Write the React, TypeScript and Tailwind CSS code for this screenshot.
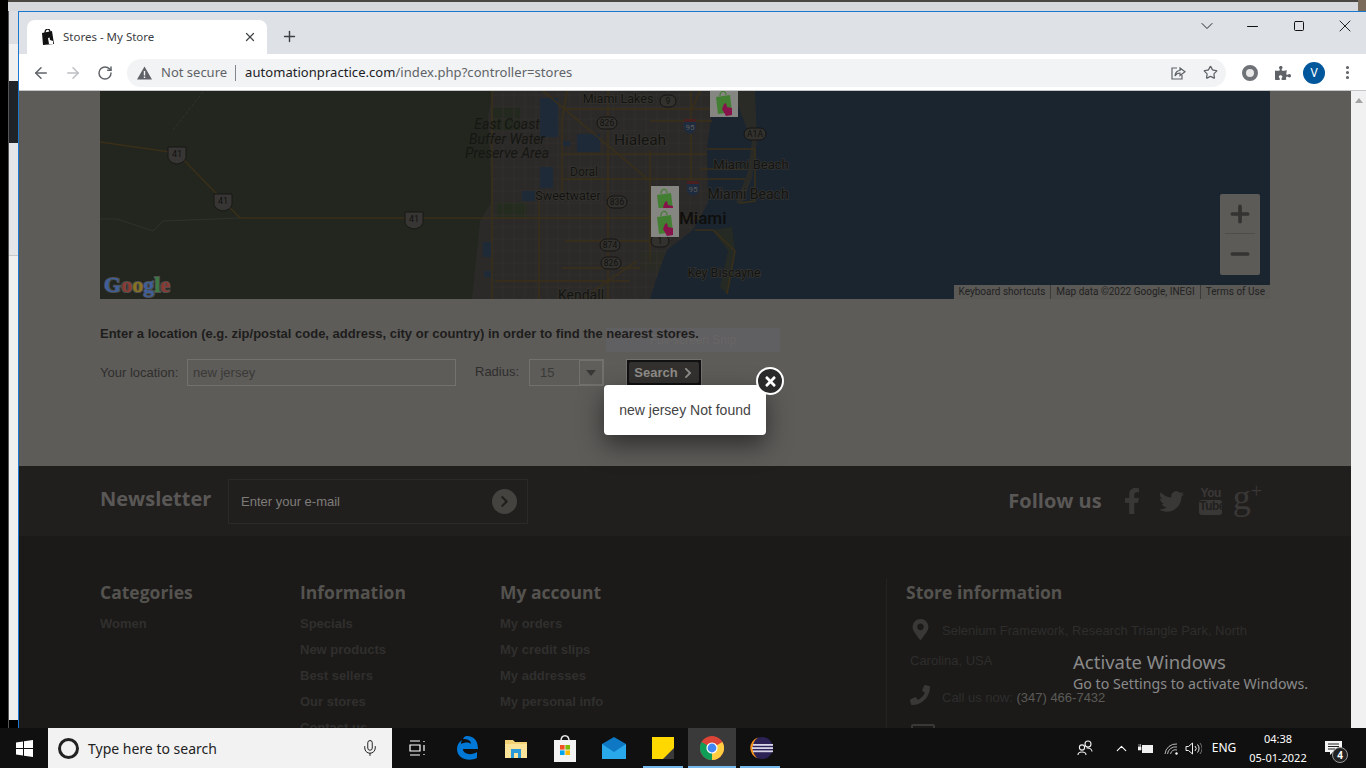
import {
  ArrowLeft,
  ArrowRight,
  ChevronDown,
  ChevronUp,
  EllipsisVertical,
  Mic,
  Minus,
  Plus,
  RotateCw,
  Square,
  Star,
  X,
} from "lucide-react";
import {
  FaChevronRight,
  FaFacebookF,
  FaMapMarkerAlt,
  FaPhoneAlt,
  FaPuzzlePiece,
  FaTimes,
  FaTwitter,
} from "react-icons/fa";

const mapFont = "Roboto, sans-serif";

// major roads, in map coordinates
const roads = [
  "M0 51 L77 62 L140 127 L393 127",
  "M392 0 V208",
  "M439 110 V208",
  "M467 0 L462 30 V105",
  "M508 0 V208",
  "M550 60 V170",
  "M591 0 V90",
  "M443 0 L550 90",
  "M537 170 L483 207",
  "M393 127 H600",
  "M462 88 H645",
  "M462 63 H607",
  "M463 18 H610",
  "M550 30 H612",
  "M465 150 H555",
  "M462 177 H540",
  "M395 190 H530",
  "M607 58 H655 V110 L640 112",
  "M600 78 H645",
  "M595 139 H613 L635 160 L627 203",
  "M600 0 L591 20",
];

const lakes = [
  [440, 7, 18, 39],
  [440, 76, 13, 21],
  [422, 100, 13, 10],
  [383, 151, 9, 15],
  [477, 43, 23, 18],
  [462, 50, 8, 5],
  [384, 180, 7, 6],
];

const labels = [
  { t: "Miami Lakes", x: 518, y: 12, s: 12.5 },
  { t: "Hialeah", x: 540, y: 54, s: 15.5 },
  { t: "Doral", x: 484, y: 85, s: 12 },
  { t: "Sweetwater", x: 468, y: 109, s: 12.5 },
  { t: "Miami Beach", x: 651, y: 78, s: 13 },
  { t: "Miami Beach", x: 648, y: 108, s: 14 },
  { t: "Key Biscayne", x: 624, y: 186, s: 12.5 },
  { t: "Kendall", x: 481, y: 209, s: 14 },
];

const badges = [
  { t: "826", x: 507, y: 32, w: 20 },
  { t: "9", x: 568, y: 10, w: 16 },
  { t: "A1A", x: 655, y: 43, w: 22 },
  { t: "836", x: 517, y: 111, w: 20 },
  { t: "874", x: 510, y: 154, w: 20 },
  { t: "826", x: 511, y: 172, w: 20 },
  { t: "1", x: 560, y: 150, w: 18 },
];

function Pin({ x, y }: { x: number; y: number }) {
  return (
    <g transform={`translate(${x} ${y})`}>
      <rect width="28" height="29" fill="#858581" />
      <path d="M6 9 L20 7 L22 24 L8 26 Z" fill="#437f33" />
      <path d="M10 8 C10 2 16 2 16 7" fill="none" stroke="#437f33" strokeWidth="1.2" />
      <path d="M14 16 L16 15 L17 19 L22 20 L22 27 L16 28 L12 21 Z" fill="#86134a" />
    </g>
  );
}

function MapCanvas() {
  return (
    <svg width="1170" height="208" viewBox="0 0 1170 208" className="block">
      <rect width="1170" height="208" fill="#22261f" />
      <path d="M393 0 L388 25 L392 110 L380 130 L372 208 H640 V0 Z" fill="#2c2a28" />
      <rect x="393" y="16" width="27" height="24" fill="#24291f" />
      <rect x="397" y="111" width="30" height="15" fill="#242c20" />
      <path d="M540 160 h30 v20 h-30 z" fill="#2b2b26" />
      {Array.from({ length: 22 }, (_, i) => (
        <path key={i} d={`M${392 + i * 11} 0 V208`} stroke="#33312e" strokeWidth="0.7" />
      ))}
      {Array.from({ length: 18 }, (_, i) => (
        <path key={i} d={`M392 ${4 + i * 12} H640`} stroke="#33312e" strokeWidth="0.7" />
      ))}
      {lakes.map(([x, y, w, h], i) => (
        <rect key={i} x={x} y={y} width={w} height={h} fill="#1f2a39" />
      ))}
      <path
        d="M640 0 L612 22 L607 56 L608 112 L593 139 L567 159 L557 186 L550 208 H1170 V0 Z"
        fill="#1b2530"
      />
      <path d="M632 0 H655 L657 50 L652 87 L642 113 L636 112 L648 80 L652 50 Z" fill="#2a2b27" />
      <path d="M612 139 L632 136 L635 160 L627 203 L620 196 L628 160 Z" fill="#262a24" />
      <path d="M0 128 L17 128 L53 140 L63 130 L140 127" fill="none" stroke="#34332f" strokeWidth="0.8" />
      <path d="M103 1 L73 39" fill="none" stroke="#2f3830" strokeWidth="0.8" strokeDasharray="3 2" />
      {roads.map((d, i) => (
        <path key={i} d={d} fill="none" stroke="#3a2f18" strokeWidth="1.5" />
      ))}
      {[
        [77, 63],
        [123, 110],
        [314, 128],
      ].map(([x, y], i) => (
        <g key={i}>
          <path
            d={`M${x - 9} ${y - 7} h18 l0 11 q-2 5 -9 6 q-7 -1 -9 -6 z`}
            fill="#383634"
            stroke="#171716"
          />
          <text x={x} y={y + 3} fontSize="9" textAnchor="middle" fill="#11110f" fontFamily={mapFont}>
            41
          </text>
        </g>
      ))}
      {badges.map((b) => (
        <g key={b.t + b.x}>
          <rect x={b.x - b.w / 2} y={b.y - 6} width={b.w} height="12" rx="6" fill="#33312e" stroke="#141413" />
          <text x={b.x} y={b.y + 3} fontSize="8.5" textAnchor="middle" fill="#11110f" fontFamily={mapFont}>
            {b.t}
          </text>
        </g>
      ))}
      {[
        [590, 35],
        [593, 97],
      ].map(([x, y]) => (
        <g key={x}>
          <path d={`M${x - 6} ${y - 7} h12 v9 q-1 4 -6 6 q-5 -2 -6 -6 z`} fill="#1f2b3e" />
          <rect x={x - 6} y={y - 7} width="12" height="3" fill="#4a1f1f" />
          <text x={x} y={y + 4} fontSize="8" textAnchor="middle" fill="#5c5b58" fontFamily={mapFont}>
            95
          </text>
        </g>
      ))}
      <g fontFamily={mapFont} fontSize="14" fontStyle="italic" fill="#151612" textAnchor="middle">
        <text x="407" y="38">East Coast</text>
        <text x="407" y="53">Buffer Water</text>
        <text x="407" y="67">Preserve Area</text>
      </g>
      <g fontFamily={mapFont} fill="#131311" textAnchor="middle" stroke="#34332f" strokeWidth="1.5" paintOrder="stroke">
        {labels.map((l) => (
          <text key={l.t + l.y} x={l.x} y={l.y} fontSize={l.s}>
            {l.t}
          </text>
        ))}
      </g>
      <text x="579" y="133" fontFamily={mapFont} fontSize="17" fontWeight="500" fill="#0e0e0d">
        Miami
      </text>
      <Pin x={610} y={-3} />
      <Pin x={551} y={95} />
      <Pin x={551} y={117} />
      <text
        x="4"
        y="201"
        fontFamily="'Liberation Serif', serif"
        fontWeight="700"
        fontSize="22"
        stroke="#4e4e4c"
        strokeWidth="2"
        paintOrder="stroke"
      >
        <tspan fill="#3f5f9c">G</tspan>
        <tspan fill="#8a3a33">o</tspan>
        <tspan fill="#8a7320">o</tspan>
        <tspan fill="#3f5f9c">g</tspan>
        <tspan fill="#3c7a45">l</tspan>
        <tspan fill="#8a3a33">e</tspan>
      </text>
    </svg>
  );
}

function Favicon() {
  return (
    <svg width="14" height="16" viewBox="0 0 14 16">
      <path d="M1 4 L11 2 L13 15 L2 16 Z" fill="#111" />
      <path d="M4 4 C4 -1 9 -1 9 3" fill="none" stroke="#111" strokeWidth="1.3" />
      <path d="M7 9 L8.5 8.5 L9 11 L12 12 L12 15 L8 15 Z" fill="#fff" />
    </svg>
  );
}

function BrowserChrome() {
  return (
    <>
      <div className="h-[42px] bg-[#dee1e6] flex items-end pl-[8px] relative shrink-0">
        <div className="w-[240px] h-[34px] bg-white rounded-t-[8px] flex items-center pl-[14px] pr-[10px] text-[#3c4043] text-[11.5px] font-['Noto_Sans',sans-serif]">
          <Favicon />
          <span className="ml-[8px]">Stores - My Store</span>
          <X size={14} strokeWidth={2.2} className="ml-auto text-[#44474a]" />
        </div>
        <Plus size={17} strokeWidth={2} className="ml-[14px] mb-[9px] text-[#3c4043]" />
        <div className="ml-auto flex items-center self-start mt-[4px] text-[#111]">
          <ChevronDown size={20} strokeWidth={1.1} className="mr-[27px]" />
          <Minus size={17} strokeWidth={1.6} className="mr-[32px]" />
          <Square size={12} strokeWidth={2} className="mr-[30px]" />
          <X size={20} strokeWidth={1.1} className="mr-[11px]" />
        </div>
      </div>
      <div className="h-[37px] pt-px bg-white border-b border-[#c4c6ca] flex items-center shrink-0 text-[#5f6368]">
        <ArrowLeft size={18} strokeWidth={2} className="ml-[13px]" />
        <ArrowRight size={18} strokeWidth={2} className="ml-[14px] text-[#bcbfc3]" />
        <RotateCw size={16} strokeWidth={2.2} className="ml-[15px]" />
        <div className="ml-[14px] w-[1099px] h-[28px] rounded-full bg-[#f1f3f4] flex items-center pl-[10px] font-['Noto_Sans',sans-serif] text-[13px]">
          <svg width="15" height="14" viewBox="0 0 15 14">
            <path d="M7.5 0.5 L15 13.5 H0 Z" fill="#5f6368" />
            <rect x="6.8" y="5" width="1.4" height="4.5" fill="#f1f3f4" />
            <rect x="6.8" y="10.5" width="1.4" height="1.5" fill="#f1f3f4" />
          </svg>
          <span className="ml-[9px] text-[#5f6368]">Not secure</span>
          <span className="ml-[8px] w-px h-[16px] bg-[#80868b]" />
          <span className="ml-[9px] text-[#202124] tracking-[0.05px]">
            automationpractice.com<span className="text-[#5f6368]">/index.php?controller=stores</span>
          </span>
          <svg width="16" height="16" viewBox="0 0 16 16" fill="none" stroke="#5f6368" strokeWidth="1.2" className="ml-auto">
            <path d="M7 3 H2 V14 H12 V10" />
            <path d="M5 11 C5 7 8 5.5 10 5.5 V3 L15 6.8 L10 10.5 V8 C8 8 6 9 5 11 Z" />
          </svg>
          <Star size={15} strokeWidth={2} className="ml-[17px] mr-[8px] text-[#5f6368]" />
        </div>
        <div className="ml-[16px] w-[16px] h-[16px] rounded-full border-[4px] border-[#6f7378] bg-[#e8e8e8]" />
        <FaPuzzlePiece size={16} className="ml-[17px] text-[#5f6368]" />
        <div className="ml-[12px] w-[22px] h-[22px] rounded-full bg-[#01579b] text-white text-[12px] flex items-center justify-center font-['Noto_Sans',sans-serif]">
          V
        </div>
        <EllipsisVertical size={17} strokeWidth={2.4} className="ml-[14px] text-[#5f6368]" />
      </div>
    </>
  );
}

function StoreLocator() {
  return (
    <div className="h-[375px] bg-[#5d5c59] pl-[81px] relative font-['Liberation_Sans',sans-serif]">
      {/* snipping tool tooltip ghosted through the overlay */}
      <div className="absolute left-[587px] top-[237px] w-[174px] h-[24px] bg-[#605f61] flex items-center justify-center text-[12px] text-[#686766]">
        Full-screen Snip
      </div>
      <div className="relative w-[1170px] h-[208px] overflow-hidden">
        <MapCanvas />
        <div className="absolute left-[1120px] top-[103px] w-[40px] h-[81px] bg-[#5c5b58] rounded-[2px] flex flex-col items-center text-[#343331]">
          <Plus size={26} strokeWidth={3.4} className="mt-[7px]" />
          <div className="w-[30px] h-px bg-[#4e4d4a] mt-[6px]" />
          <Minus size={26} strokeWidth={3.4} className="mt-[7px]" />
        </div>
        <div className="absolute right-0 bottom-0 h-[14px] flex bg-[#5a5956] text-[#222] text-[10px] leading-[14px] font-['Roboto',sans-serif] divide-x divide-[#3c3b39]">
          <span className="px-[5px]">Keyboard shortcuts</span>
          <span className="px-[5px]">Map data ©2022 Google, INEGI</span>
          <span className="px-[5px]">Terms of Use</span>
        </div>
      </div>
      <p className="relative mt-[27px] text-[13px] leading-[15px] font-bold text-[#1e1d1c]">
        Enter a location (e.g. zip/postal code, address, city or country) in order to find the nearest stores.
      </p>
      <div className="mt-[18px] flex items-center text-[13px] text-[#2f2e2d]">
        <span className="w-[87px]">Your location:</span>
        <div className="w-[269px] h-[27px] border border-[#72716d] flex items-center pl-[5px] text-[#3a3937]">
          new jersey
        </div>
        <span className="ml-[19px] w-[54px] -mt-[2px]">Radius:</span>
        <div className="w-[75px] h-[27px] border border-[#72716d] flex items-center pl-[10px] text-[#3a3937]">
          15
          <div className="ml-auto w-[24px] h-[25px] border border-[#72716d] bg-[#5f5e5b] flex items-center justify-center">
            <div className="w-0 h-0 border-x-[5px] border-x-transparent border-t-[6px] border-t-[#3a3937]" />
          </div>
        </div>
        <div className="ml-[22px] w-[76px] h-[27px] border border-[#72716d] bg-[#111] p-[2px]">
          <div className="h-full rounded-[2px] bg-[#33312f] text-[#8e8c88] text-[13px] font-bold flex items-center justify-center gap-[4px]">
            Search <FaChevronRight size={12} />
          </div>
        </div>
      </div>
    </div>
  );
}

function NewsletterBar() {
  return (
    <div className="h-[70px] bg-[#211f1e] pl-[81px] pr-[89px] flex items-center font-['Open_Sans',sans-serif]">
      <h3 className="w-[128px] text-[20px] font-bold text-[#5a5856] -mt-[4px]">Newsletter</h3>
      <div className="w-[300px] h-[45px] border border-[#2c2a29] flex items-center pl-[12px] pr-[10px] mt-[1px] text-[13px] text-[#7e7c79] font-['Liberation_Sans',sans-serif]">
        Enter your e-mail
        <div className="ml-auto w-[25px] h-[25px] rounded-full bg-[#45433f] text-[#1f1e1d] flex items-center justify-center">
          <FaChevronRight size={13} />
        </div>
      </div>
      <h3 className="ml-auto text-[20px] font-bold text-[#5a5856]">Follow us</h3>
      <div className="ml-[18px] flex items-center text-[#3a3837]">
        <FaFacebookF size={26} className="w-[24px]" />
        <FaTwitter size={25} className="ml-[15px]" />
        <div className="ml-[15px] w-[24px] flex flex-col items-center font-['Liberation_Sans',sans-serif] font-bold leading-none">
          <span className="text-[12px] tracking-[-0.5px]">You</span>
          <span className="mt-px w-[23px] h-[15px] rounded-[3px] bg-[#3a3837] text-[#211f1e] text-[12px] text-center tracking-[-0.5px]">
            Tube
          </span>
        </div>
        <span className="ml-[10px] flex items-start font-['Liberation_Serif',serif] leading-none -mt-[8px]">
          <span className="text-[36px] leading-[36px]">g</span>
          <span className="text-[20px] leading-[20px] mt-[2px]">+</span>
        </span>
      </div>
    </div>
  );
}

function FooterColumn({ title, links, width }: { title: string; links: string[]; width: string }) {
  return (
    <div className={width}>
      <h4 className="text-[17.5px] leading-[26px] font-bold text-[#55534f] font-['Open_Sans',sans-serif]">{title}</h4>
      <ul className="mt-[6px]">
        {links.map((l) => (
          <li key={l} className="h-[26px] text-[13px] leading-[26px] font-bold text-[#302f2d]">
            {l}
          </li>
        ))}
      </ul>
    </div>
  );
}

function Footer() {
  return (
    <div className="flex-1 bg-[#1b1a19] pl-[81px] pt-[43px] flex font-['Liberation_Sans',sans-serif] overflow-hidden">
      <FooterColumn title="Categories" links={["Women"]} width="w-[200px]" />
      <FooterColumn
        title="Information"
        links={["Specials", "New products", "Best sellers", "Our stores", "Contact us"]}
        width="w-[200px]"
      />
      <FooterColumn
        title="My account"
        links={["My orders", "My credit slips", "My addresses", "My personal info"]}
        width="w-[386px]"
      />
      <div className="w-[420px] border-l border-[#242322] pl-[19px] h-[200px]">
        <h4 className="text-[17.5px] leading-[26px] font-bold text-[#55534f] font-['Open_Sans',sans-serif]">
          Store information
        </h4>
        <div className="mt-[11px] h-[30px] flex items-center text-[13px] text-[#2e2d2c]">
          <FaMapMarkerAlt size={21} className="ml-[4px] mr-[11px] -mt-[3px] text-[#3a3836]" />
          Selenium Framework, Research Triangle Park, North
        </div>
        <div className="h-[30px] pl-[4px] text-[13px] leading-[30px] text-[#2e2d2c]">Carolina, USA</div>
        <div className="mt-[7px] h-[30px] flex items-center text-[13px] text-[#2e2d2c]">
          <FaPhoneAlt size={20} className="ml-[4px] mr-[12px] -mt-[6px] text-[#3a3836] -scale-x-100" />
          Call us now:&nbsp;<span className="text-[#5c5a57]">(347) 466-7432</span>
        </div>
        <div className="mt-[11px] ml-[5px] w-[24px] h-[20px] border-2 border-[#3a3836] rounded-[2px]" />
      </div>
    </div>
  );
}

function Taskbar() {
  return (
    <div className="h-[40px] bg-[#101010] flex items-center shrink-0 relative">
      <div className="w-[48px] flex justify-center">
        <svg width="17" height="17" viewBox="0 0 17 17" fill="#fff">
          <path d="M0 2.4 L7 1.4 V8 H0 Z M8 1.2 L17 0 V8 H8 Z M0 9 H7 V15.6 L0 14.6 Z M8 9 H17 V17 L8 15.8 Z" />
        </svg>
      </div>
      <div className="w-[344px] h-[40px] bg-[#f2f2f2] flex items-center pl-[10px] pr-[13px] text-[#222] text-[14px] font-['Noto_Sans',sans-serif]">
        <div className="w-[21px] h-[21px] rounded-full border-[3px] border-[#222]" />
        <span className="ml-[9px]">Type here to search</span>
        <Mic size={18} strokeWidth={1.3} className="ml-auto text-[#222]" />
      </div>
      <div className="w-[50px] flex justify-center">
        <svg width="17" height="16" viewBox="0 0 17 16" fill="none" stroke="#fff" strokeWidth="1.2">
          <path d="M1 1 H11 M1 15 H11 M1 5 H11 V11 H1 Z M15 1 V2 M15 5 V11 M15 14 V15" />
        </svg>
      </div>
      <div className="w-[49px] flex justify-center">
        <svg width="22" height="24" viewBox="0 0 22 24">
          <path
            d="M11 0 C18 0 22 5 22 13 H7 C7 18 15 20 21 16 V22 C13 26 1 23 1 13 C1 9 3 6 6 4 C5 6 5 7 5 8 C9 6 13 6 15 8 C15 4 11 3 7 3 C8 1 9 0 11 0 Z"
            fill="#0078d7"
          />
        </svg>
      </div>
      <div className="w-[49px] flex justify-center">
        <svg width="22" height="22" viewBox="0 0 22 22">
          <path d="M0 3 H8 L10 5 H22 V21 H0 Z" fill="#f3d277" />
          <path d="M0 7 H22 V21 H0 Z" fill="#fbe39a" />
          <path d="M6 12 H16 V21 H13 V16 H9 V21 H6 Z" fill="#2a9ad9" />
        </svg>
      </div>
      <div className="w-[49px] flex justify-center">
        <svg width="24" height="28" viewBox="0 0 24 28">
          <path d="M8 7 C8 0 16 0 16 7" fill="none" stroke="#e8e8e8" strokeWidth="1.5" />
          <rect x="1" y="6" width="22" height="22" fill="#f3f3f3" />
          <rect x="7" y="11" width="4.6" height="4.6" fill="#f25022" />
          <rect x="12.4" y="11" width="4.6" height="4.6" fill="#7fba00" />
          <rect x="7" y="16.4" width="4.6" height="4.6" fill="#00a4ef" />
          <rect x="12.4" y="16.4" width="4.6" height="4.6" fill="#ffb900" />
        </svg>
      </div>
      <div className="w-[49px] flex justify-center">
        <svg width="24" height="22" viewBox="0 0 24 22">
          <path d="M0 7 L12 0 L24 7 V22 H0 Z" fill="#0f78c4" />
          <path d="M0 7 L12 15 L24 7 V22 H0 Z" fill="#29a9ea" />
        </svg>
      </div>
      <div className="w-[50px] h-full flex justify-center items-center relative">
        <div className="w-[22px] h-[22px] bg-[#ffd800] relative">
          <div className="absolute right-0 bottom-0 w-0 h-0 border-l-[11px] border-l-transparent border-b-[11px] border-b-[#3a3a3a]" />
        </div>
        <div className="absolute bottom-0 left-[5px] w-[40px] h-[2px] bg-[#76b9ed]" />
      </div>
      <div className="w-[48px] h-full bg-[#3a3a3a] flex justify-center items-center relative">
        <svg width="24" height="24" viewBox="0 0 24 24">
          <circle cx="12" cy="12" r="12" fill="#db4437" />
          <path d="M12 12 L1.6 6 A12 12 0 0 0 12 24 Z" fill="#0f9d58" />
          <path d="M12 12 L12 24 A12 12 0 0 0 22.4 6 Z" fill="#ffcd40" />
          <circle cx="12" cy="12" r="5.6" fill="#fff" />
          <circle cx="12" cy="12" r="4.4" fill="#4285f4" />
        </svg>
        <div className="absolute bottom-0 left-0 w-full h-[2px] bg-[#76b9ed]" />
      </div>
      <div className="w-[50px] h-full flex justify-center items-center relative">
        <svg width="24" height="24" viewBox="0 0 24 24">
          <circle cx="13" cy="12" r="11" fill="#2c2255" />
          <path d="M9 1.5 A11 11 0 0 0 9 22.5 A13 13 0 0 1 9 1.5 Z" fill="#f7941e" />
          <rect x="4" y="8" width="20" height="1.8" fill="#d7d5e8" />
          <rect x="3" y="11.2" width="21" height="1.8" fill="#d7d5e8" />
          <rect x="4" y="14.4" width="20" height="1.8" fill="#d7d5e8" />
        </svg>
        <div className="absolute bottom-0 left-[4px] w-[40px] h-[2px] bg-[#76b9ed]" />
      </div>

      <div className="ml-auto flex items-center text-white text-[12px] font-['Noto_Sans',sans-serif]">
        <svg width="16" height="16" viewBox="0 0 16 16" fill="none" stroke="#f0f0f0" strokeWidth="1.1">
          <circle cx="11" cy="4" r="3" />
          <circle cx="5" cy="7.5" r="2.6" />
          <path d="M1 15 C1 11 9 11 9 15 M9.5 8 C12 7.5 15 9 15 11.5" />
        </svg>
        <ChevronUp size={17} strokeWidth={1.5} className="ml-[20px]" />
        <svg width="16" height="11" viewBox="0 0 16 11" className="ml-[8px]" fill="#f0f0f0">
          <path d="M4 2 H15 V10 H4 Z M5 3 V9 H14 V3 Z" />
          <rect x="5" y="3" width="9" height="6" />
          <path d="M0 4 H3 V7 H0 Z M1 1 V4 M2.5 1 V4" stroke="#f0f0f0" strokeWidth="0.6" />
        </svg>
        <svg width="15" height="13" viewBox="0 0 15 13" fill="none" stroke="#c9c9c9" strokeWidth="0.9" className="ml-[10px]">
          <path d="M1 12 A11 11 0 0 1 13 2 M3.5 12 A8 8 0 0 1 13 5 M6.5 12 A5 5 0 0 1 13 8" />
          <circle cx="12.5" cy="11.5" r="1.2" fill="#fff" stroke="none" />
        </svg>
        <svg width="17" height="13" viewBox="0 0 17 13" fill="none" stroke="#f0f0f0" strokeWidth="1" className="ml-[6px]">
          <path d="M1 4.5 H3.5 L7.5 1 V12 L3.5 8.5 H1 Z" />
          <path d="M10 4 A3.5 3.5 0 0 1 10 9 M12.5 2.5 A6 6 0 0 1 12.5 10.5" />
          <path d="M15 1 A9 9 0 0 1 15 12" stroke="#777" />
        </svg>
        <span className="ml-[7px] w-[30px] text-center">ENG</span>
        <div className="ml-[8px] w-[62px] flex flex-col items-center leading-[19px] text-[11px] whitespace-nowrap">
          <span>04:38</span>
          <span>05-01-2022</span>
        </div>
        <div className="ml-[16px] mr-[24px] relative w-[17px] h-[15px]">
          <svg width="17" height="15" viewBox="0 0 17 15" fill="#f4f4f4">
            <path d="M0 0 H17 V11 H8 L5 14 V11 H0 Z" />
            <path d="M3 3 H14 M3 5.5 H14 M3 8 H10" stroke="#222" strokeWidth="1" />
          </svg>
          <div className="absolute left-[7px] top-[6px] w-[16px] h-[16px] rounded-full bg-[#222] border border-[#9a9a9a] text-[10px] leading-[14px] text-center font-bold">
            4
          </div>
        </div>
      </div>
    </div>
  );
}

export default function App() {
  return (
    <div className="w-[1366px] h-[768px] bg-black flex flex-col overflow-hidden relative">
      <div className="h-[11px] flex shrink-0">
        <div className="w-[8px] bg-black" />
        <div className="flex-1 flex flex-col">
          <div className="h-[2px] bg-[#4a4743]" />
          <div className="flex-1 bg-[#d6d8db]" />
        </div>
        <div className="w-[8px] bg-[#7a6b5a]" />
      </div>
      <div className="h-[717px] flex">
        <div className="w-[8px] bg-black shrink-0" />
        <div className="w-[10px] shrink-0 flex flex-col border-l border-[#555]">
          <div className="h-[33px] bg-[#dcdee1]" />
          <div className="h-[37px] bg-[#f0f0f0]" />
          <div className="h-[62px] bg-[#202428]" />
          <div className="h-[112px] bg-[#e4e5e8]" />
          <div className="h-[465px] bg-[#efefef] border-t border-[#c8c8c8]" />
          <div className="flex-1 bg-black" />
        </div>
        <div className="flex-1 flex flex-col border-l border-t border-[#1a78d0] min-w-0">
          <BrowserChrome />
          <div className="flex-1 flex min-h-0">
            <div className="flex-1 flex flex-col min-w-0">
              <StoreLocator />
              <NewsletterBar />
              <Footer />
            </div>
            <div className="w-[15px] bg-[#f1f1f1] flex justify-center pt-[7px] shrink-0">
              <div className="w-0 h-0 border-x-[4px] border-x-transparent border-b-[5px] border-b-[#a3a3a3]" />
            </div>
          </div>
        </div>
      </div>
      <Taskbar />

      {/* fancybox popup sits above the dimmed page */}
      <div className="absolute left-[604px] top-[385px] w-[162px] h-[50px] bg-white rounded-[4px] shadow-[0_10px_25px_rgba(0,0,0,0.5)] flex items-center justify-center text-[14px] text-[#444] font-['Liberation_Sans',sans-serif]">
        new jersey Not found
      </div>
      <div className="absolute left-[756px] top-[367px] w-[28px] h-[28px] rounded-full bg-[#2a2a2a] border-[2px] border-white text-white flex items-center justify-center">
        <FaTimes size={15} />
      </div>

      <div className="absolute left-[1073px] top-[649px] text-[#8a8a8a] font-['Noto_Sans',sans-serif] pointer-events-none">
        <div className="text-[18.5px] leading-[26px]">Activate Windows</div>
        <div className="text-[14.2px] leading-[20px] -mt-px">Go to Settings to activate Windows.</div>
      </div>
    </div>
  );
}
